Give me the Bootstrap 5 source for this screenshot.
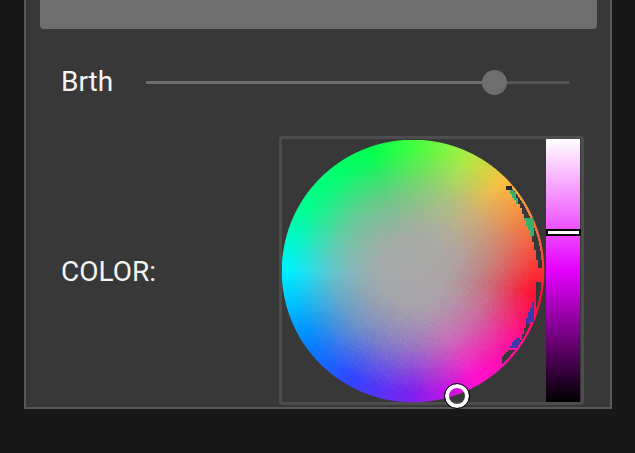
<!DOCTYPE html>
<html lang="en">
<head>
<meta charset="utf-8">
<title>Light controls</title>
<link rel="stylesheet" href="https://cdn.jsdelivr.net/npm/bootstrap@5.3.0/dist/css/bootstrap.min.css">
<style>
html,body{height:453px;overflow:hidden}
body{background:#181818;color:#f4f4f4;font-family:Roboto,"Liberation Sans",sans-serif;font-size:28px}
.shell{width:588px;height:409px;margin-left:24px;background:#383838;border:2px solid #585858;border-top:0;padding:0 14px}
.topbtn{width:557px;height:29px;background:#6e6e6e;border:0;border-radius:0 0 4px 4px}
.rowline{height:107px;padding-left:21px;padding-bottom:1px}
.lbl{width:85px;line-height:1}
.track{width:423px;height:3px;background:linear-gradient(90deg,#6e6e6e 348px,#555 348px)}
.thumb{width:25px;height:25px;border-radius:50%;background:#6e6e6e;position:absolute;left:336px;top:-11px}
.colorrow{padding-left:21px}
.colorlbl{width:218px;padding-top:2px}
.picker{width:305px;height:269px;border:3px solid #4d4d4d;border-radius:3px}
.wheelbox{width:263px;height:263px;margin-top:1px}
.wheelcanvas{display:block}
.bar{width:34px;height:263px;margin-left:1px;background:linear-gradient(#fff,#e600ff 50%,#000)}
.barhandle{left:0;top:90px;width:35px;height:7px;background:#fff;border:2px solid #000}
.dot{width:24px;height:24px;background:transparent;border:4px solid #fff;outline:1px solid #000;outline-offset:0;border-radius:50%;left:163px;top:244px}
</style>
</head>
<body>
<div class="shell">
  <button class="topbtn d-block" type="button" aria-label="Action"></button>
  <div class="rowline d-flex align-items-center">
    <div class="lbl">Brth</div>
    <div class="track position-relative"><div class="thumb"></div></div>
  </div>
  <div class="colorrow d-flex align-items-center">
    <div class="colorlbl">COLOR:</div>
    <div class="picker d-flex">
      <div class="wheelbox position-relative">
        <canvas id="wheel" class="wheelcanvas" width="263" height="263"></canvas>
        <div class="dot position-absolute"></div>
      </div>
      <div class="bar position-relative"><div class="barhandle position-absolute"></div></div>
    </div>
  </div>
</div>
<script src="https://cdn.jsdelivr.net/npm/bootstrap@5.3.0/dist/js/bootstrap.bundle.min.js"></script>
<script>
(function(){
  var c=document.getElementById('wheel'),ctx=c.getContext('2d'),img=ctx.createImageData(263,263),d=img.data;
  var OX=282,OY=140,CX=131,CY=131,R=131.3;
  var stops=[[0,[64,255,64]],[25,[170,235,70]],[45,[248,192,64]],[75,[244,100,64]],[100,[255,16,48]],[125,[255,16,150]],[150,[255,16,208]],[180,[128,32,240]],[210,[48,70,255]],[240,[0,144,255]],[270,[0,240,255]],[300,[0,255,144]],[340,[0,255,80]],[360,[64,255,64]]];
  var sats=[[0,0],[.25,.03],[.4,.15],[.6,.4],[.8,.78],[.93,1],[1,1]];
  var GREY=[168,168,168],DARK=[56,56,56];
  var polys=[
    {p:[[512,188],[519,203],[524,216],[531,235],[535,250],[539,268],[552,268],[552,188]],c:DARK,inner:true},
    {p:[[537,282],[536,300],[535,323],[526,325],[521,340],[516,350],[509,351],[503,356],[502,368],[552,368],[552,282]],c:DARK,inner:true},
    {p:[[509,190],[514,190],[519,203],[517,204]],c:[58,172,108]},
    {p:[[524,218],[534,218],[534,237],[531,236]],c:[58,172,108]},
    {p:[[534,300],[534,322],[525,324],[529,312]],c:[58,58,176]},
    {p:[[508,349],[518,337],[521,340],[516,349]],c:[58,58,176]},
    {p:[[507,187],[513,187],[513,190],[507,190]],c:[40,40,40]}
  ];
  function inPoly(p,x,y){var r=false;for(var i=0,j=p.length-1;i<p.length;j=i++){var a=p[i],b=p[j];if((a[1]>y)!=(b[1]>y)&&x<(b[0]-a[0])*(y-a[1])/(b[1]-a[1])+a[0])r=!r}return r}
  function lerpTab(t,v){for(var i=1;i<t.length;i++){if(v<=t[i][0]){var f=(v-t[i-1][0])/(t[i][0]-t[i-1][0]);return [t[i-1],t[i],f]}}var n=t.length-1;return [t[n-1],t[n],1]}
  function rnd(x,y){var s=Math.sin(x*12.9898+y*78.233)*43758.5453;return s-Math.floor(s)}
  for(var y=0;y<263;y++)for(var x=0;x<263;x++){
    var dx=x+.5-CX,dy=y+.5-CY,r=Math.sqrt(dx*dx+dy*dy);
    var a=Math.max(0,Math.min(1,R-r+.5));
    if(a<=0)continue;
    var qx=(x>>1)*2+1,qy=(y>>1)*2+1;
    var qdx=qx-CX,qdy=qy-CY,qr=Math.sqrt(qdx*qdx+qdy*qdy);
    var useQ=r<R-4;
    var ux=useQ?qdx:dx,uy=useQ?qdy:dy,ur=useQ?qr:r;
    var th=(Math.atan2(ux,-uy)*180/Math.PI+360)%360;
    var h=lerpTab(stops,th),col=[0,1,2].map(function(i){return h[0][1][i]+(h[1][1][i]-h[0][1][i])*h[2]});
    var t=Math.min(1,ur/131);
    var s=lerpTab(sats,t),m=s[0][1]+(s[1][1]-s[0][1])*s[2];
    if(useQ&&t>.3&&t<.93)m=Math.max(0,Math.min(1,m+(rnd(qx,qy)-.5)*.07));
    var out=col.map(function(v,i){return GREY[i]+(v-GREY[i])*m});
    if(r>70){
      var px=OX+qx,py=OY+qy;
      for(var k=0;k<polys.length;k++){
        var P=polys[k];
        if(P.inner&&r>=129)continue;
        if(inPoly(P.p,px,py))out=P.c;
      }
    }
    var o=(y*263+x)*4;d[o]=out[0];d[o+1]=out[1];d[o+2]=out[2];d[o+3]=a*255;
  }
  ctx.putImageData(img,0,0);
})();
</script>
</body>
</html>
